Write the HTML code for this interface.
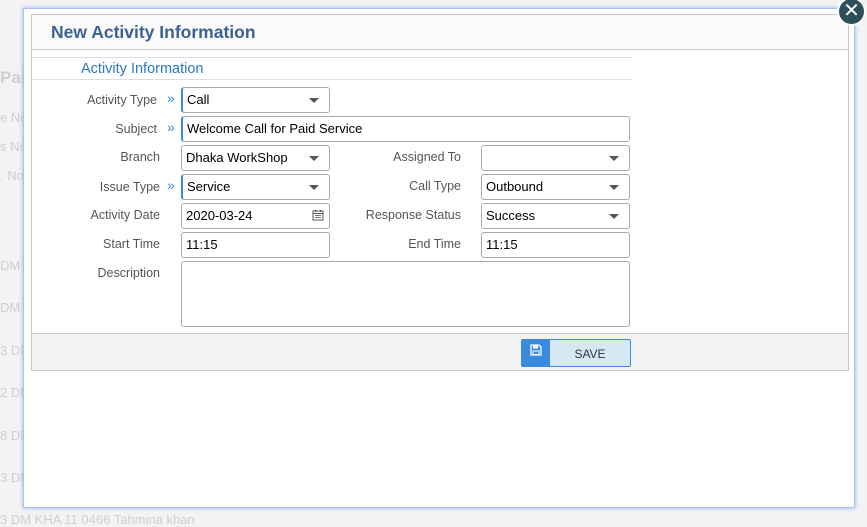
<!DOCTYPE html>
<html><head><style>
*{box-sizing:border-box;margin:0;padding:0}
body{width:867px;height:520px;overflow:hidden;background:#f3f3f3;font-family:"Liberation Sans",Arial,sans-serif;position:relative;font-size:13px}
.bg{position:absolute;color:#cfcfcf;font-size:13px}
.modal{position:absolute;left:23px;top:8px;width:832px;height:500px;background:#fff;border:1px solid #a9c2ef;box-shadow:0 0 4px #8fb0ef}
.frame{position:absolute;left:31px;top:14px;width:818px;height:357px;border:1px solid #c8c8c8;background:#fff}
.hdr{position:absolute;left:0;top:0;width:816px;height:35px;background:#fafafa;border-bottom:1px solid #c8c8c8}
.hdr h1{position:absolute;left:19px;top:7px;font-size:17.5px;color:#3a6391;font-weight:bold}
.sec{position:absolute;left:0;top:42px;width:600px;height:23px;border-top:1px solid #dcdce8;border-bottom:1px solid #dcdce8}
.sec span{position:absolute;left:49px;top:3px;font-size:14.5px;color:#2a78c8}
.lbl{position:absolute;color:#555;font-size:12.5px;text-align:right;width:150px}
.chev{position:absolute;color:#3a8be0;font-size:14px}
.in{position:absolute;height:26px;border:1px solid #aaa;border-radius:3px;background:#fff;font-size:13px;color:#000;padding:5px 4px;line-height:14px}
.req{border-left:2px solid #3a8be0}
.arr{position:absolute;right:10px;top:10px;width:0;height:0;border-left:5px solid transparent;border-right:5px solid transparent;border-top:5px solid #555}
.foot{position:absolute;left:0;top:318px;width:816px;height:37px;background:#f3f3f3;border-top:1px solid #c8c8c8}
.close{position:absolute;left:837px;top:-3px;width:29px;height:29px;border-radius:50%;background:#2e4e5c;border:2px solid #fff;color:#fff;font-size:20px;line-height:24px;text-align:center}
</style></head><body>
<div class="bg" style="left:0;top:68px;font-size:17px;font-weight:bold">Pai</div>
<div class="bg" style="left:0;top:110px">e No</div>
<div class="bg" style="left:0;top:139px">s No</div>
<div class="bg" style="left:0;top:168px">. No</div>
<div class="bg" style="left:0;top:258px">DM</div>
<div class="bg" style="left:0;top:300px">DM</div>
<div class="bg" style="left:0;top:343px">3 DM</div>
<div class="bg" style="left:0;top:385px">2 DM</div>
<div class="bg" style="left:0;top:428px">8 DM</div>
<div class="bg" style="left:0;top:470px">3 DM</div>
<div class="bg" style="left:0;top:512px">3 DM  KHA  11  0466  Tahmina khan</div>
<div class="modal"></div>
<div class="frame">
 <div class="hdr"><h1>New Activity Information</h1></div>
 <div class="sec"><span>Activity Information</span></div>
 <div class="foot"></div>
</div>
<div class="lbl" style="left:7px;top:93px">Activity Type</div><div class="chev" style="left:167px;top:90px">»</div>
<div class="in req" style="left:181px;top:87px;width:149px">Call<div class="arr"></div></div>
<div class="lbl" style="left:7px;top:122px">Subject</div><div class="chev" style="left:167px;top:119px">»</div>
<div class="in req" style="left:181px;top:116px;width:449px">Welcome Call for Paid Service</div>
<div class="lbl" style="left:10px;top:150px">Branch</div>
<div class="in" style="left:181px;top:145px;width:149px">Dhaka WorkShop<div class="arr"></div></div>
<div class="lbl" style="left:311px;top:150px">Assigned To</div>
<div class="in" style="left:481px;top:145px;width:149px"><div class="arr"></div></div>
<div class="lbl" style="left:10px;top:180px">Issue Type</div><div class="chev" style="left:167px;top:177px">»</div>
<div class="in req" style="left:181px;top:174px;width:149px">Service<div class="arr"></div></div>
<div class="lbl" style="left:311px;top:179px">Call Type</div>
<div class="in" style="left:481px;top:174px;width:149px">Outbound<div class="arr"></div></div>
<div class="lbl" style="left:10px;top:208px">Activity Date</div>
<div class="in" style="left:181px;top:203px;width:149px">2020-03-24<svg style="position:absolute;right:5px;top:5px" width="12" height="12" viewBox="0 0 12 12"><rect x="1" y="2" width="10" height="9" fill="none" stroke="#555"/><line x1="1" y1="4.5" x2="11" y2="4.5" stroke="#555"/><path d="M3 6.5h6M3 8.5h6" stroke="#777"/><path d="M3.5 1v2M8.5 1v2" stroke="#555"/></svg></div>
<div class="lbl" style="left:311px;top:208px">Response Status</div>
<div class="in" style="left:481px;top:203px;width:149px">Success<div class="arr"></div></div>
<div class="lbl" style="left:10px;top:237px">Start Time</div>
<div class="in" style="left:181px;top:232px;width:149px">11:15</div>
<div class="lbl" style="left:311px;top:237px">End Time</div>
<div class="in" style="left:481px;top:232px;width:149px">11:15</div>
<div class="lbl" style="left:10px;top:266px">Description</div>
<div class="in" style="left:181px;top:261px;width:449px;height:66px"></div>
<div style="position:absolute;left:521px;top:339px;width:110px;height:28px;border:1px solid #3a8be0;border-radius:2px;background:#d6e8f4">
 <div style="position:absolute;left:0;top:0;width:28px;height:26px;background:#3a8be0"></div>
 <svg style="position:absolute;left:8px;top:4px" width="12" height="12" viewBox="0 0 12 12"><path d="M1 1h8l2 2v8H1z" fill="none" stroke="#fff" stroke-width="1.3"/><rect x="3" y="1.5" width="5" height="3" fill="#fff"/><rect x="3" y="7" width="6" height="3.5" fill="none" stroke="#fff"/></svg>
 <div style="position:absolute;left:28px;top:7px;width:80px;text-align:center;font-size:12px;color:#333">SAVE</div>
</div>
<div class="close">✕</div>
</body></html>
